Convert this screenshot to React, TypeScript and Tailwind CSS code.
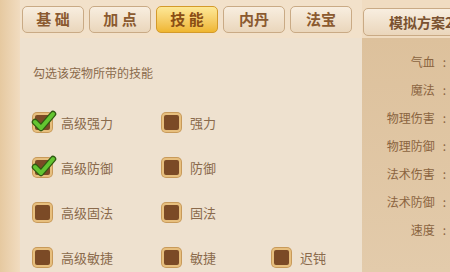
import React from "react";

const tabs = ["基 础", "加 点", "技 能", "内丹", "法宝"];
const stats = ["气血", "魔法", "物理伤害", "物理防御", "法术伤害", "法术防御", "速度"];
const rows: { label: string; on?: boolean }[][] = [
  [{ label: "高级强力", on: true }, { label: "强力" }],
  [{ label: "高级防御", on: true }, { label: "防御" }],
  [{ label: "高级固法" }, { label: "固法" }],
  [{ label: "高级敏捷" }, { label: "敏捷" }, { label: "迟钝" }],
];
const colW = ["w-[129px]", "w-[110px]", "w-[80px]"];

const Box = ({ on }: { on?: boolean }) => (
  <div className="relative w-[19px] h-[19px] rounded-[4px] bg-[#7b4a26] border-2 border-[#e7bf7e] shadow-[0_0_0_1px_#c89a5a] shrink-0">
    {on && (
      <svg
        className="absolute left-[-4px] top-[-6px]"
        width="26"
        height="24"
        viewBox="0 0 26 24"
      >
        <path
          d="M4 13 L10 19 L22 5"
          fill="none"
          stroke="#2f5a12"
          strokeWidth="6.5"
          strokeLinecap="round"
          strokeLinejoin="round"
        />
        <path
          d="M4 13 L10 19 L22 5"
          fill="none"
          stroke="#63c531"
          strokeWidth="4"
          strokeLinecap="round"
          strokeLinejoin="round"
        />
      </svg>
    )}
  </div>
);

const App = () => {
  return (
    <div
      className="w-[450px] h-[272px] overflow-hidden flex bg-[#f0dfc7]"
      style={{ fontFamily: '"Noto Sans CJK SC", "Noto Sans", sans-serif' }}
    >
      <div className="w-[20px] h-full bg-gradient-to-r from-[#e6c9a0] to-[#f1dcc0]" />
      <div className="w-[342px] h-full flex flex-col">
        <div className="h-[38px] flex items-start pt-[6px] pl-[2px] gap-[5px] bg-[#f2e1ca]">
          {tabs.map((t, i) => (
            <div
              key={t}
              className={`w-[62px] h-[27px] rounded-[5px] border flex items-center justify-center text-[15px] font-semibold ${
                i === 2
                  ? "bg-gradient-to-b from-[#fde896] to-[#efb62e] border-[#d49a2a] text-[#8a4e14]"
                  : "bg-gradient-to-b from-[#f8eee0] to-[#ead6bb] border-[#c9aa85] text-[#8b5a30]"
              }`}
            >
              {t}
            </div>
          ))}
        </div>
        <div className="flex-1 bg-[#eee1cf] pl-[13px] pt-[27px]">
          <div className="text-[12px] text-[#8a6a4c] leading-[16px]">勾选该宠物所带的技能</div>
          <div className="flex flex-col gap-[26px] mt-[32px]">
            {rows.map((r, ri) => (
              <div key={ri} className="flex items-center h-[19px]">
                {r.map((c, ci) => (
                  <div key={c.label} className={`${colW[ci]} shrink-0 flex items-center gap-[9px]`}>
                    <Box on={c.on} />
                    <span className="text-[13px] text-[#8a6a4c]">{c.label}</span>
                  </div>
                ))}
              </div>
            ))}
          </div>
        </div>
      </div>
      <div className="w-[88px] h-full flex flex-col">
        <div className="h-[38px] pt-[8px] pl-[1px] bg-[#f0dcc1]">
          <div className="h-[28px] w-[100px] rounded-[5px] border border-[#c9aa85] bg-gradient-to-b from-[#f8eee0] to-[#ead6bb] flex items-center pl-[25px] text-[14px] font-semibold text-[#7a5230] whitespace-nowrap">
            模拟方案2
          </div>
        </div>
        <div className="flex-1 bg-gradient-to-b from-[#ddc19c] to-[#e3cbab] pt-[14px] pr-[4px] flex flex-col gap-[9px]">
          {stats.map((s) => (
            <div key={s} className="flex justify-end items-center h-[19px] text-[12px] text-[#8a6440]">
              <span>{s}</span>
              <span className="ml-[8px]">:</span>
            </div>
          ))}
        </div>
      </div>
    </div>
  );
};

export default App;
